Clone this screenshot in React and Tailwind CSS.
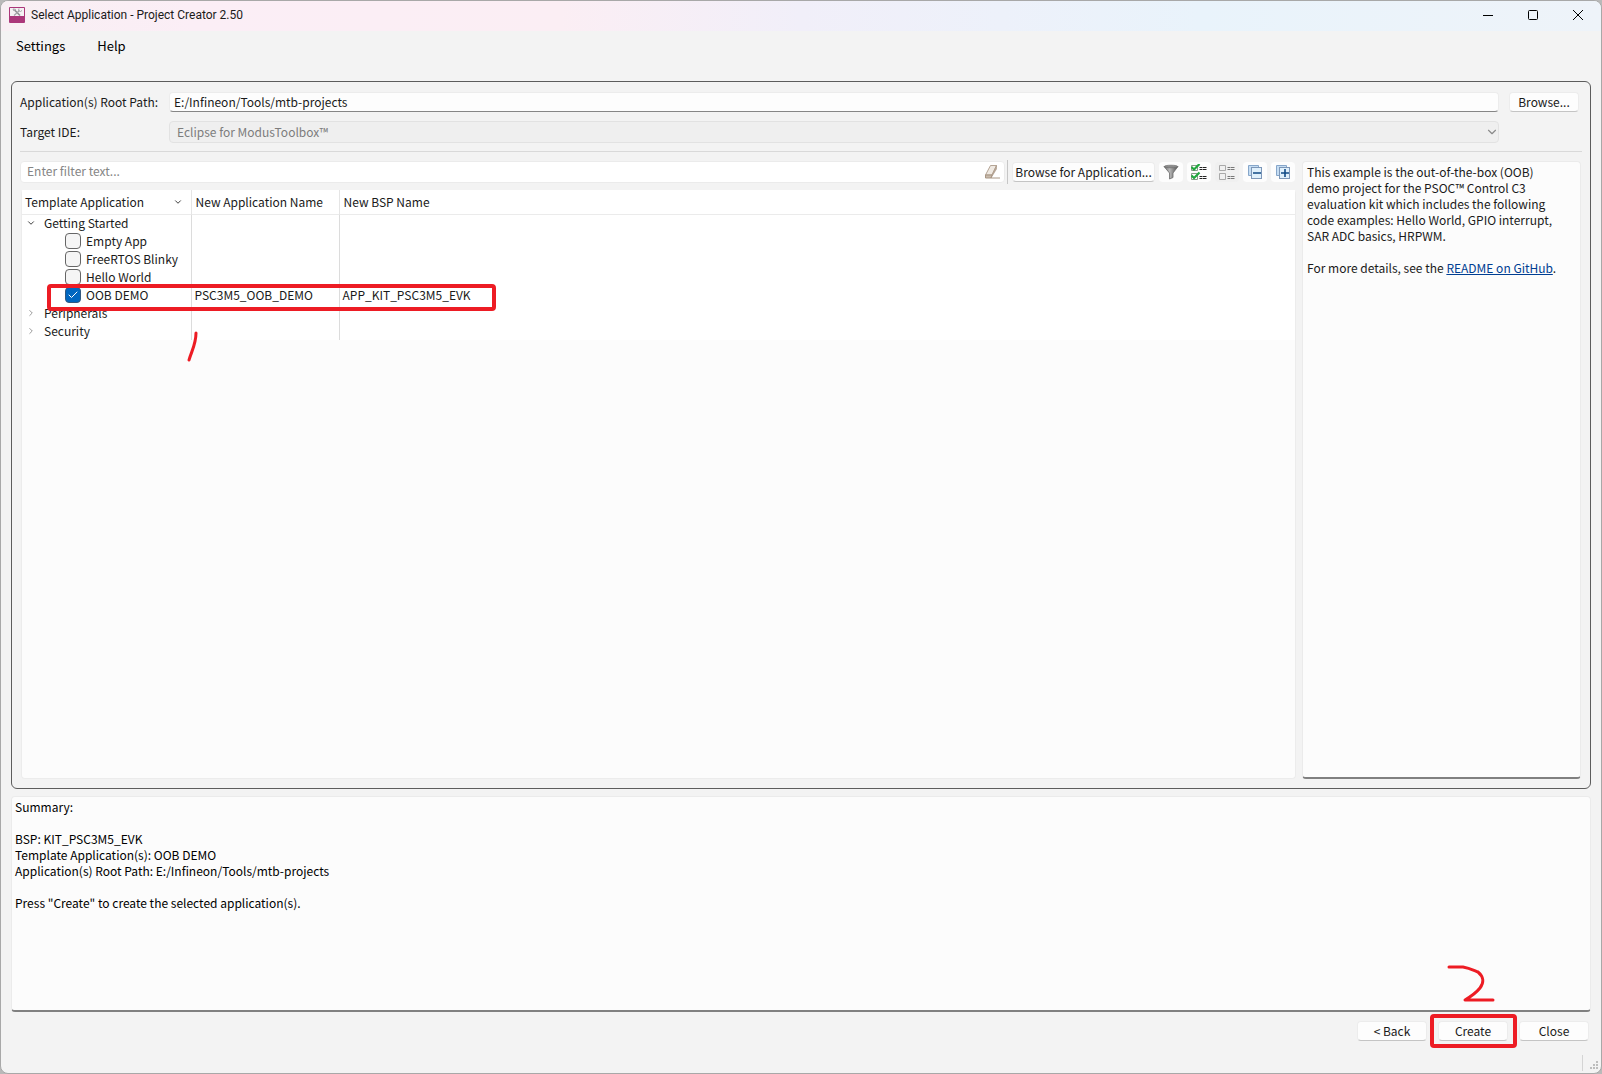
import { useState } from 'react';
import { Check, ChevronDown, ChevronRight } from 'lucide-react';

const RED = '#ed1c24';

const templates = [
  { name: 'Empty App' },
  { name: 'FreeRTOS Blinky' },
  { name: 'Hello World' },
  { name: 'OOB DEMO', appName: 'PSC3M5_OOB_DEMO', bspName: 'APP_KIT_PSC3M5_EVK', marked: true },
];

function AppIcon() {
  return (
    <svg className="w-4 h-4" viewBox="0 0 16 16">
      <rect width="16" height="16" rx="1" fill="#ab377a" />
      <rect x="1" y="1" width="14" height="8" fill="#f4f1f3" />
      <path d="M5.5 3L11 8.5" stroke="#8e8e92" strokeWidth="1.6" fill="none" />
      <path d="M10.5 3.5L5 8.5" stroke="#a2a2a6" strokeWidth="1.2" fill="none" />
      <path d="M4 2l2.5.3L5 4zM10 1.5l-.5 2 2 1 1.5-1" stroke="#a5a5a8" fill="none" />
    </svg>
  );
}

function EraserIcon() {
  return (
    <svg className="w-4 h-4" viewBox="0 0 16 16">
      <path d="M1.5 11L6.5 1.5h6L8 11z" fill="#efe9e2" stroke="#b5a595" />
      <path d="M1.5 11v3H7l1-3z" fill="#c9bbac" stroke="#a89684" />
      <path d="M8 11l4.5-9.5V5L7 14z" fill="#bcab9a" stroke="#a89684" strokeWidth=".6" />
      <path d="M7 14h9" stroke="#a89684" />
    </svg>
  );
}

function FilterIcon() {
  return (
    <svg className="w-4 h-4" viewBox="0 0 16 16">
      <defs>
        <linearGradient id="funnel" x1="0" x2="1">
          <stop offset="0" stopColor="#6c6c6c" />
          <stop offset=".4" stopColor="#b9b9b9" />
          <stop offset="1" stopColor="#4f4f4f" />
        </linearGradient>
      </defs>
      <path d="M1 2.5h14l-5 6.5v4.5L6.5 15V9z" fill="url(#funnel)" stroke="#6b6b6b" strokeWidth=".8" />
      <ellipse cx="8" cy="2.5" rx="6.8" ry="1.3" fill="#8b8b8b" stroke="#666" strokeWidth=".6" />
    </svg>
  );
}

function CheckListIcon({ checked }) {
  const ink = checked ? '#222' : '#777';
  return (
    <svg className="w-4 h-4" viewBox="0 0 16 16">
      <path
        d="M.5 1.5h6v5h-6zM.5 9.5h6v6h-6z"
        fill={checked ? '#fff' : 'none'}
        stroke={checked ? '#8a9a8a' : '#a9a9a9'}
      />
      <path d="M8.5 3.5h3M12 3.5h3.500M8.500 5.500h3M12 5.500h3.500M8.500 12.500h3M12 12.500h3.500M8.500 14.500h3M12 14.500h3.500" stroke={ink} />
      {checked && (
        <path d="M.5 3L3 5.500 8.500 0M.5 11.500L3 14l5.500-5.500" stroke="#22a83f" strokeWidth="2.200" fill="none" />
      )}
    </svg>
  );
}

function TreeIcon({ plus }) {
  return (
    <svg className="w-4 h-4" viewBox="0 0 16 16">
      <path d="M4 11.500H1.500v-10h10V4" fill="#c5ddf3" stroke="#86a6ca" />
      <rect x="4.500" y="3.500" width="10" height="11" fill="#dff0fc" stroke="#7d97b8" />
      <path d={plus ? 'M6 9h8M10 5v8' : 'M6 9h8'} stroke="#0f4a86" strokeWidth="1.600" />
    </svg>
  );
}

function PushButton({ children, className = 'w-[70px]' }) {
  return (
    <button
      type="button"
      className={`flex h-5 shrink-0 items-center justify-center rounded border border-[#ececec] border-b-[#c4c4c4] bg-[#fdfdfd] leading-4 whitespace-nowrap ${className}`}
    >
      {children}
    </button>
  );
}

function ToolButton({ label, disabled, children }) {
  return (
    <button
      type="button"
      aria-label={label}
      disabled={disabled}
      className={`flex h-5 w-6 shrink-0 items-center justify-center rounded ${disabled ? 'bg-[#f0f0f0]' : 'bg-[#fdfdfd]'}`}
    >
      {children}
    </button>
  );
}

function TitleBar() {
  return (
    <header className="flex h-[30px] shrink-0 items-start justify-between bg-[linear-gradient(90deg,#f8eff3_0%,#fbeef6_12%,#fbeef4_35%,#f1eff9_50%,#e9f3fb_75%,#eef3f9_100%)] pl-2">
      <div className="flex items-center gap-1.5 pt-1.5">
        <AppIcon />
        <h1 className="font-[Roboto,sans-serif] text-[12px] leading-4">Select Application - Project Creator 2.50</h1>
      </div>
      <div className="flex">
        <button type="button" aria-label="Minimize" className="flex h-7 w-[45px] items-center justify-center">
          <svg className="w-2.5 h-2.5" viewBox="0 0 10 10"><path d="M0 5.5h10" stroke="#000" /></svg>
        </button>
        <button type="button" aria-label="Maximize" className="flex h-7 w-[45px] items-center justify-center">
          <svg className="w-2.5 h-2.5" viewBox="0 0 10 10">
            <rect x=".5" y=".5" width="9" height="9" rx="1" fill="none" stroke="#000" />
          </svg>
        </button>
        <button type="button" aria-label="Close window" className="flex h-7 w-[46px] items-center justify-center">
          <svg className="w-2.5 h-2.5" viewBox="0 0 10 10"><path d="M0 0l10 10M10 0L0 10" stroke="#000" /></svg>
        </button>
      </div>
    </header>
  );
}

function TemplateTable() {
  const [selected, setSelected] = useState(['OOB DEMO']);

  const toggle = (name) =>
    setSelected((list) => (list.includes(name) ? list.filter((n) => n !== name) : [...list, name]));

  return (
    <table className="w-full table-fixed border-collapse bg-white text-left">
      <colgroup>
        <col className="w-[169px]" />
        <col className="w-[148px]" />
        <col />
      </colgroup>
      <thead>
        <tr className="h-6 border-b border-[#ebebeb]">
          <th className="border-r border-[#e5e5e5] p-0 pl-[3px] font-normal">
            <div className="flex items-center justify-between pr-2">
              Template Application
              <ChevronDown className="w-2.5 h-2.5" strokeWidth={2} />
            </div>
          </th>
          <th className="border-r border-[#e5e5e5] p-0 pl-1 font-normal">New Application Name</th>
          <th className="p-0 pl-1 font-normal">New BSP Name</th>
        </tr>
      </thead>
      <tbody>
        <tr className="h-[18px]">
          <td className="border-r border-[#dcdcdc] p-0 pl-1">
            <button type="button" className="flex items-center gap-2 leading-4">
              <ChevronDown className="w-2.5 h-2.5" strokeWidth={2} />
              Getting Started
            </button>
          </td>
          <td className="border-r border-[#dcdcdc] p-0" />
          <td className="p-0" />
        </tr>
        {templates.map(({ name, appName, bspName, marked }) => (
          <tr key={name} className="h-[18px]">
            <td className="relative border-r border-[#dcdcdc] p-0 pl-[43px]">
              <label className="flex items-center gap-[5px] leading-4 whitespace-nowrap">
                <span className="grid h-4 w-4 shrink-0 place-items-center">
                  <input
                    type="checkbox"
                    checked={selected.includes(name)}
                    onChange={() => toggle(name)}
                    className="col-start-1 row-start-1 h-4 w-4 appearance-none rounded border border-[#666] bg-[#f5f5f5] checked:border-[#33597f] checked:bg-[#0067c0]"
                  />
                  {selected.includes(name) && (
                    <Check className="pointer-events-none col-start-1 row-start-1 h-3 w-3 text-white" strokeWidth={2} />
                  )}
                </span>
                {name}
              </label>
              {marked && (
                <span className="pointer-events-none absolute -top-0.5 left-[25px] z-10 h-[27px] w-[449px] rounded-sm border-4 border-[#ed1c24]" />
              )}
            </td>
            <td className="border-r border-[#dcdcdc] p-0 pl-[3px] leading-4">{appName}</td>
            <td className="p-0 pl-[3px] leading-4">{bspName}</td>
          </tr>
        ))}
        {['Peripherals', 'Security'].map((group) => (
          <tr key={group} className="h-[18px]">
            <td className="border-r border-[#dcdcdc] p-0 pl-1">
              <button type="button" className="flex items-center gap-2 leading-4">
                <ChevronRight className="w-2.5 h-2.5 text-[#888]" strokeWidth={2} />
                {group}
              </button>
            </td>
            <td className="border-r border-[#dcdcdc] p-0" />
            <td className="p-0" />
          </tr>
        ))}
      </tbody>
    </table>
  );
}

export default function App() {
  return (
    <div className="min-h-screen bg-[#b9b9b9] font-['Noto_Sans_CJK_SC',sans-serif] text-[12px] leading-4 text-[#1a1a1a]">
      <div className="flex min-h-screen flex-col overflow-hidden rounded-lg border border-[#a8a8a8] bg-[#f3f3f3]">
        <TitleBar />

        <nav className="flex h-[50px] shrink-0 items-start gap-8 px-[15px] pt-[5px] text-[13px] leading-5 text-black">
          <button type="button">Settings</button>
          <button type="button">Help</button>
        </nav>

        <main className="flex grow flex-col px-2.5">
          <section className="flex grow flex-col rounded-md border border-[#5c5c5c] p-2 pt-2.5 pb-[9px]">
            {/* Paths */}
            <div className="flex h-5 items-center pr-[3px]">
              <label htmlFor="root-path" className="w-[149px] shrink-0">Application(s) Root Path:</label>
              <input
                id="root-path"
                defaultValue="E:/Infineon/Tools/mtb-projects"
                className="mr-2.5 h-5 min-w-0 grow rounded border border-[#ececec] border-b-[#868686] bg-[#fdfdfd] px-1 pb-0.5 outline-none"
              />
              <PushButton>Browse...</PushButton>
            </div>
            <div className="mt-2 flex h-6 items-center pr-[83px]">
              <label htmlFor="ide" className="w-[149px] shrink-0">Target IDE:</label>
              <div className="grid min-w-0 grow items-center">
                <select
                  id="ide"
                  disabled
                  className="col-start-1 row-start-1 h-[22px] w-full appearance-none rounded border border-[#e2e2e2] bg-[#efefef] px-[7px] text-[#7d7d7d] opacity-100"
                >
                  <option>Eclipse for ModusToolbox™</option>
                </select>
                <ChevronDown className="pointer-events-none col-start-1 row-start-1 h-3.5 w-3.5 justify-self-end text-[#8a8a8a]" />
              </div>
            </div>
            <hr className="mt-[7px] border-[#d9d9d9]" />

            <div className="mt-2 flex grow gap-1.5 pr-px">
              <div className="flex min-w-0 grow flex-col">
                {/* Filter and toolbar */}
                <div className="flex h-6 items-center pr-px">
                  <div className="flex h-[22px] min-w-0 grow items-center rounded border border-[#ebebeb] bg-white pr-1">
                    <input
                      aria-label="Filter"
                      placeholder="Enter filter text..."
                      className="min-w-0 grow px-1.5 pb-0.5 outline-none placeholder:text-[#858585]"
                    />
                    <EraserIcon />
                  </div>
                  <div className="mr-1 ml-0.5 h-6 w-px bg-[#c6c6c6]" />
                  <PushButton className="w-[143px]">Browse for Application...</PushButton>
                  <div className="ml-1 flex gap-1">
                    <ToolButton label="Filter selected"><FilterIcon /></ToolButton>
                    <ToolButton label="Select all"><CheckListIcon checked /></ToolButton>
                    <ToolButton label="Clear all" disabled><CheckListIcon /></ToolButton>
                    <ToolButton label="Collapse all"><TreeIcon /></ToolButton>
                    <ToolButton label="Expand all"><TreeIcon plus /></ToolButton>
                  </div>
                </div>

                <div className="relative mt-1.5 ml-px grow rounded border border-t-0 border-[#ececec] bg-[#fcfcfc]">
                  <TemplateTable />
                  <svg className="pointer-events-none absolute top-[140px] left-[162px] h-8 w-4" viewBox="0 0 16 32">
                    <path d="M12 3C12 14 8 20 5 30" fill="none" stroke={RED} strokeWidth="3" strokeLinecap="round" />
                  </svg>
                </div>
              </div>

              <aside className="mt-px w-[279px] shrink-0 rounded border border-[#ebebeb] border-b-2 border-b-[#808080] bg-[#fcfcfc] px-1 pt-0.5">
                <p>
                  This example is the out-of-the-box (OOB)<br />
                  demo project for the PSOC™ Control C3<br />
                  evaluation kit which includes the following<br />
                  code examples: Hello World, GPIO interrupt,<br />
                  SAR ADC basics, HRPWM.
                </p>
                <p className="mt-4 whitespace-nowrap">
                  For more details, see the{' '}
                  <a href="#readme" className="text-[#003e92] underline">README on GitHub</a>.
                </p>
              </aside>
            </div>
          </section>

          <section className="relative mt-[7px] h-[216px] shrink-0 rounded border border-[#ebebeb] border-b-2 border-b-[#808080] bg-[#fcfcfc] px-[3px] pt-0.5 text-black">
            <h2>Summary:</h2>
            <p className="mt-4">BSP: KIT_PSC3M5_EVK</p>
            <p>Template Application(s): OOB DEMO</p>
            <p>Application(s) Root Path: E:/Infineon/Tools/mtb-projects</p>
            <p className="mt-4">Press &quot;Create&quot; to create the selected application(s).</p>
            <svg className="pointer-events-none absolute right-[95px] bottom-1.5 h-10 w-12" viewBox="0 0 48 40">
              <path
                d="M2 3H16C22 4 26 6 31 8C37 13 37 19 33 24C29 29 23 33 18 36H46"
                fill="none"
                stroke={RED}
                strokeWidth="3"
                strokeLinecap="round"
                strokeLinejoin="round"
              />
            </svg>
          </section>

          <div className="mt-[9px] flex justify-end gap-[11px] pr-0.5">
            <PushButton>&lt; Back</PushButton>
            <div className="relative flex">
              <PushButton>Create</PushButton>
              <span className="pointer-events-none absolute -inset-y-[7px] -right-[9px] -left-2 rounded-sm border-4 border-[#ed1c24]" />
            </div>
            <PushButton>Close</PushButton>
          </div>
        </main>

        <footer className="mt-3 flex h-5 shrink-0 items-end justify-end gap-1.5 pr-0.5 pb-0.5">
          <div className="h-4 w-px bg-[#d4d4d4]" />
          <svg className="h-2.5 w-2.5" viewBox="0 0 10 10" fill="#bdbdbd">
            <path d="M7 0h2v2H7zM4 3h2v2H4zM7 3h2v2H7zM1 6h2v2H1zM4 6h2v2H4zM7 6h2v2H7z" />
          </svg>
        </footer>
      </div>
    </div>
  );
}
